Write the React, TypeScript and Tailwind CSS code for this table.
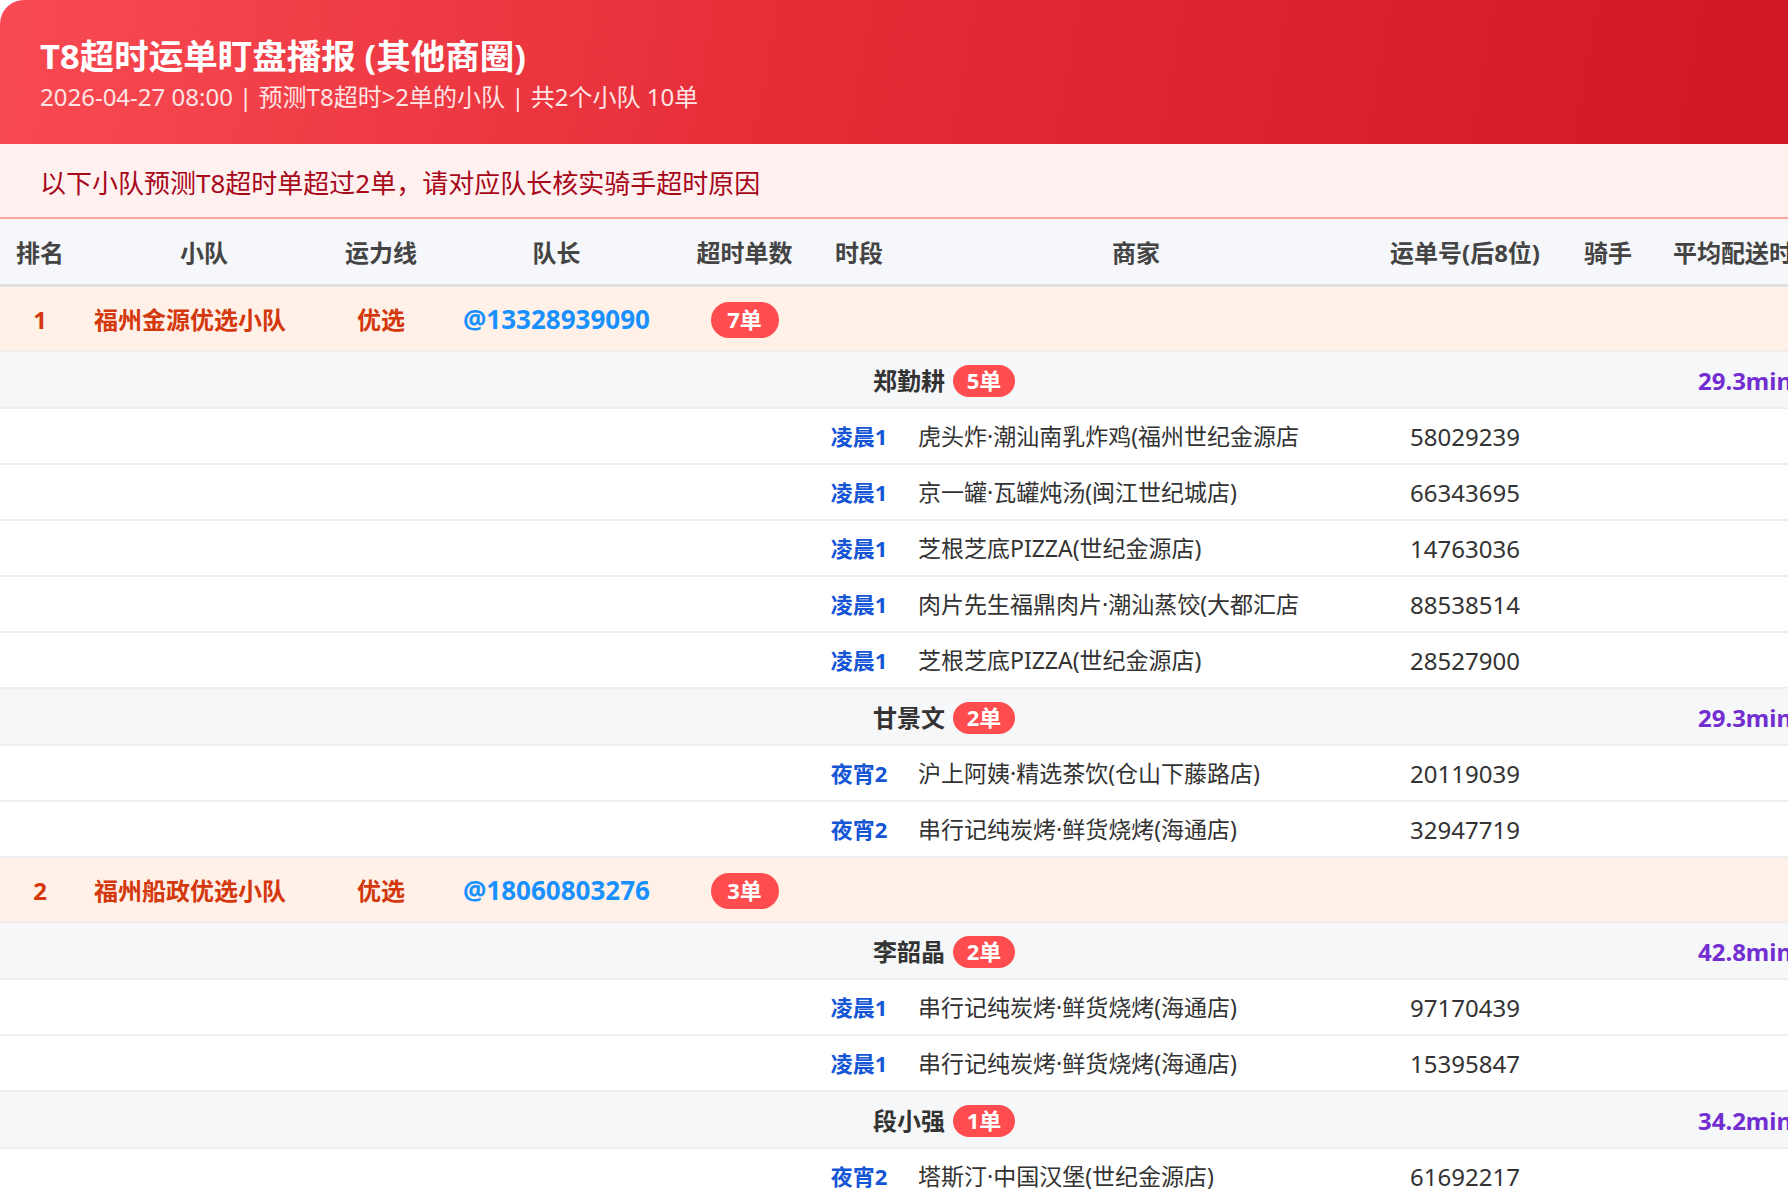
import React from "react";

type Order = [string, string, string];

interface Rider {
  name: string;
  count: number;
  avg: string;
  orders: Order[];
}

interface Team {
  rank: number;
  name: string;
  line: string;
  leader: string;
  count: number;
  riders: Rider[];
}

const teams: Team[] = [
  {
    rank: 1,
    name: "福州金源优选小队",
    line: "优选",
    leader: "@13328939090",
    count: 7,
    riders: [
      {
        name: "郑勤耕",
        count: 5,
        avg: "29.3min",
        orders: [
          ["凌晨1", "虎头炸·潮汕南乳炸鸡(福州世纪金源店", "58029239"],
          ["凌晨1", "京一罐·瓦罐炖汤(闽江世纪城店)", "66343695"],
          ["凌晨1", "芝根芝底PIZZA(世纪金源店)", "14763036"],
          ["凌晨1", "肉片先生福鼎肉片·潮汕蒸饺(大都汇店", "88538514"],
          ["凌晨1", "芝根芝底PIZZA(世纪金源店)", "28527900"],
        ],
      },
      {
        name: "甘景文",
        count: 2,
        avg: "29.3min",
        orders: [
          ["夜宵2", "沪上阿姨·精选茶饮(仓山下藤路店)", "20119039"],
          ["夜宵2", "串行记纯炭烤·鲜货烧烤(海通店)", "32947719"],
        ],
      },
    ],
  },
  {
    rank: 2,
    name: "福州船政优选小队",
    line: "优选",
    leader: "@18060803276",
    count: 3,
    riders: [
      {
        name: "李韶晶",
        count: 2,
        avg: "42.8min",
        orders: [
          ["凌晨1", "串行记纯炭烤·鲜货烧烤(海通店)", "97170439"],
          ["凌晨1", "串行记纯炭烤·鲜货烧烤(海通店)", "15395847"],
        ],
      },
      {
        name: "段小强",
        count: 1,
        avg: "34.2min",
        orders: [["夜宵2", "塔斯汀·中国汉堡(世纪金源店)", "61692217"]],
      },
    ],
  },
];

// fixed column widths shared by header and body rows
const cols =
  "grid grid-cols-[80px_248px_106px_245px_131px_98px_456px_202px_84px_190px]";

function Badge({ n, big }: { n: number; big?: boolean }) {
  return big ? (
    <span className="inline-flex h-[36px] w-[68px] items-center justify-center rounded-full bg-[#ff4d4f] text-[22px] font-bold text-white">
      {n}单
    </span>
  ) : (
    <span className="ml-[8px] inline-flex h-[32px] w-[62px] items-center justify-center rounded-full bg-[#ff4d4f] text-[22px] font-bold text-white">
      {n}单
    </span>
  );
}

function TeamRow({ team }: { team: Team }) {
  return (
    <div
      className={`${cols} h-[65px] items-center border-b-2 border-[#f3ede9] bg-[#fff1e8] pt-[2px] text-[24px] font-bold text-[#d4380d]`}
    >
      <div className="text-center">{team.rank}</div>
      <div className="pl-[14px]">{team.name}</div>
      <div className="text-center">{team.line}</div>
      <div className="text-center text-[26px] text-[#1890ff]">{team.leader}</div>
      <div className="flex justify-center">
        <Badge n={team.count} big />
      </div>
    </div>
  );
}

function RiderRow({ rider }: { rider: Rider }) {
  return (
    <div
      className={`${cols} h-[57px] items-center border-b-2 border-[#eeeeee] bg-[#f6f7f9] pt-[2px]`}
    >
      <div className="col-span-5" />
      <div className="col-span-4 flex items-center pl-[63px] text-[24px] font-bold text-[#333]">
        {rider.name}
        <Badge n={rider.count} />
      </div>
      <div className="text-center text-[24px] font-bold text-[#722ed1]">
        {rider.avg}
      </div>
    </div>
  );
}

function OrderRow({ order }: { order: Order }) {
  const [period, shop, no] = order;
  return (
    <div
      className={`${cols} h-[56px] items-center border-b-2 border-[#eeeeee] bg-white pt-[1px] text-[#333]`}
    >
      <div className="col-span-5" />
      <div className="text-center text-[22px] font-bold text-[#1456d6]">
        {period}
      </div>
      <div className="pl-[10px] text-[23px] whitespace-nowrap">{shop}</div>
      <div className="text-center text-[24px]">{no}</div>
      <div />
      <div />
    </div>
  );
}

export default function App() {
  const headers = [
    "排名",
    "小队",
    "运力线",
    "队长",
    "超时单数",
    "时段",
    "商家",
    "运单号(后8位)",
    "骑手",
    "平均配送时长",
  ];

  return (
    <div className="h-[1196px] w-[1788px] overflow-hidden bg-white font-['Noto_Sans','Noto_Sans_CJK_SC',sans-serif]">
      <div className="w-[1840px] overflow-hidden rounded-tl-[24px]">
        <header className="h-[144px] bg-[linear-gradient(100deg,#f84a52_0%,#e42b36_45%,#cf1624_100%)] px-[40px] pt-[34px] text-white">
          <h1 className="text-[34.5px] leading-[44px] font-bold">
            T8超时运单盯盘播报 (其他商圈)
          </h1>
          <p className="mt-[3px] text-[24px] leading-[32px] text-[#ffe4e4]">
            2026-04-27 08:00 | 预测T8超时&gt;2单的小队 | 共2个小队 10单
          </p>
        </header>

        <div className="border-b-2 border-[#ffa39e] bg-[#fff1f0] px-[40px] pt-[21px] pb-[16px] text-[26px] leading-[36px] text-[#a8071a]">
          以下小队预测T8超时单超过2单，请对应队长核实骑手超时原因
        </div>

        <div
          className={`${cols} h-[68px] items-center border-b-[3px] border-[#e0e0e0] bg-[#f5f7fa] pt-[2px] text-[24px] font-bold text-[#444]`}
        >
          {headers.map((h) => (
            <div key={h} className="text-center whitespace-nowrap">
              {h}
            </div>
          ))}
        </div>

        {teams.map((team) => (
          <React.Fragment key={team.rank}>
            <TeamRow team={team} />
            {team.riders.map((rider) => (
              <React.Fragment key={rider.name}>
                <RiderRow rider={rider} />
                {rider.orders.map((o) => (
                  <OrderRow key={o[2]} order={o} />
                ))}
              </React.Fragment>
            ))}
          </React.Fragment>
        ))}
      </div>
    </div>
  );
}
